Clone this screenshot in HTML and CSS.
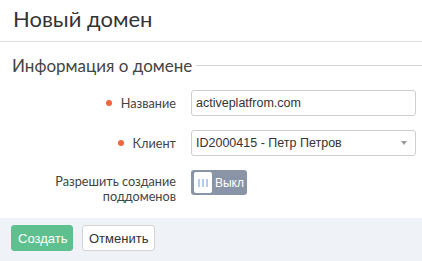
FILE: index.html
```html
<!DOCTYPE html>
<html>

<head>
  <meta charset="UTF-8">
  <title>Новый домен</title>
  <link rel="stylesheet" href="styles.css">
</head>

<body>
  <header class="page-header">
    <h1>Новый домен</h1>
  </header>

  <main>
    <div class="section-title">
      <span>Информация о домене</span>
      <div class="section-line"></div>
    </div>

    <form class="domain-form">
      <label class="field-label required" for="domain-name">Название</label>
      <input class="field-input" type="text" id="domain-name" value="activeplatfrom.com" />

      <label class="field-label required" for="client">Клиент</label>
      <div class="field-select" id="client">
        <span>ID2000415 - Петр Петров</span>
        <span class="select-arrow"></span>
      </div>

      <label class="field-label multiline">Разрешить создание<br />поддоменов</label>
      <div class="toggle">
        <div class="toggle-knob">
          <i></i><i></i><i></i>
        </div>
        <span>Выкл</span>
      </div>
    </form>
  </main>

  <footer class="form-actions">
    <button class="btn btn-primary">Создать</button>
    <button class="btn btn-default">Отменить</button>
  </footer>
</body>

</html>
```

FILE: styles.css
```css
body {
  margin: 0;
  font-family: Lato, "Open Sans", sans-serif;
  color: #333;
  background-color: white;
}

.page-header {
  height: 42px;
  padding: 0 13px;
  border-bottom: 1px solid #dcdcdc;
  box-sizing: border-box;
}

.page-header h1 {
  margin: 0;
  font-size: 22px;
  font-weight: 400;
  line-height: 38px;
}

.section-title {
  display: flex;
  align-items: center;
  height: 46px;
  padding-left: 12px;
  font-size: 17px;
  color: #444;
}

.section-line {
  flex: 1;
  height: 1px;
  margin-left: 4px;
  background-color: #d6d6d6;
}

.domain-form {
  display: grid;
  grid-template-columns: 176px 1fr;
  column-gap: 15px;
  row-gap: 14px;
  padding-right: 6px;
  padding-top: 2px;
}

.field-label {
  display: flex;
  align-items: center;
  justify-content: flex-end;
  font-size: 12.7px;
  color: #444;
}

.field-label.required::before {
  content: "";
  width: 6px;
  height: 6px;
  border-radius: 50%;
  background-color: #f0653d;
  margin-right: 9px;
}

.field-label.multiline {
  display: block;
  height: 25px;
  text-align: right;
  line-height: 15px;
  padding-top: 4px;
  box-sizing: border-box;
}

.field-input,
.field-select {
  height: 26px;
  box-sizing: border-box;
  border: 1px solid #cfcfcf;
  border-radius: 3px;
  padding: 0 4px;
  font-family: "Liberation Sans", Arial, sans-serif;
  font-size: 12.5px;
  color: #333;
  margin: 0;
  width: 100%;
}

.field-select {
  display: flex;
  align-items: center;
  justify-content: space-between;
}

.select-arrow {
  width: 0;
  height: 0;
  border-left: 3.5px solid transparent;
  border-right: 3.5px solid transparent;
  border-top: 4px solid #999;
  margin-right: 4px;
}

.toggle {
  display: flex;
  align-items: center;
  width: 56px;
  height: 25px;
  box-sizing: border-box;
  padding: 2px 3px;
  border-radius: 3px;
  background-color: #8a94a7;
  font-family: "Liberation Sans", Arial, sans-serif;
  font-size: 12px;
  color: white;
  gap: 3px;
}

.toggle-knob {
  display: flex;
  justify-content: center;
  align-items: center;
  gap: 2px;
  width: 20px;
  height: 21px;
  border-radius: 2px;
  background-color: white;
}

.toggle-knob i {
  width: 2px;
  height: 8px;
  background-color: #b3cdee;
}

.form-actions {
  display: flex;
  gap: 9px;
  margin-top: 23px;
  padding: 7px 11px;
  height: 43px;
  box-sizing: border-box;
  background-color: #eff3f7;
}

.btn {
  height: 26px;
  padding: 0 6px;
  border-radius: 3px;
  font-family: "Liberation Sans", Arial, sans-serif;
  font-size: 13px;
  cursor: pointer;
}

.btn-primary {
  width: 62px;
  border: 1px solid #5ec08e;
  background-color: #5ec08e;
  color: white;
}

.btn-default {
  width: 73px;
  border: 1px solid #d3d3d3;
  background-color: white;
  color: #333;
}
```
